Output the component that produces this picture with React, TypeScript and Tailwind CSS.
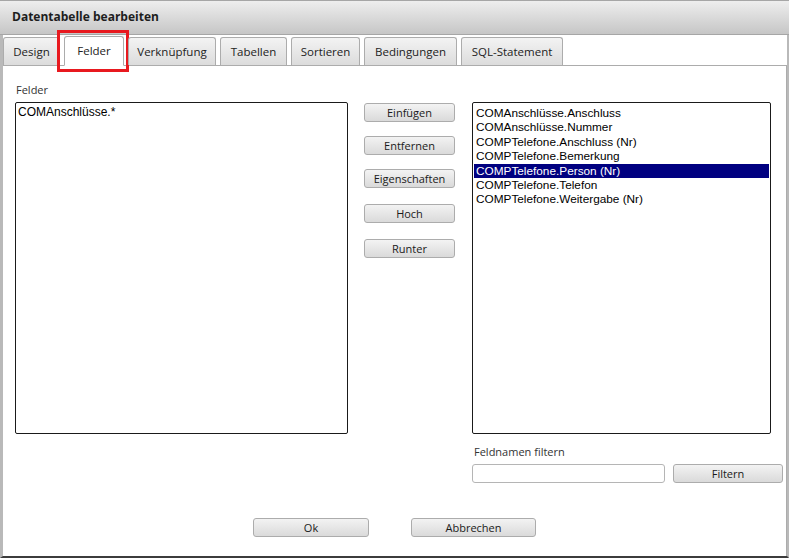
const ui = { fontFamily: '"Open Sans", "Noto Sans", "DejaVu Sans", sans-serif' };
const arial = { fontFamily: '"Liberation Sans", Arial, sans-serif' };

const tabs = [
  { label: 'Design', w: 57 },
  { label: 'Felder', w: 60 },
  { label: 'Verknüpfung', w: 88 },
  { label: 'Tabellen', w: 67 },
  { label: 'Sortieren', w: 69 },
  { label: 'Bedingungen', w: 93 },
  { label: 'SQL-Statement', w: 102 },
];

const fields = [
  'COMAnschlüsse.Anschluss',
  'COMAnschlüsse.Nummer',
  'COMPTelefone.Anschluss (Nr)',
  'COMPTelefone.Bemerkung',
  'COMPTelefone.Person (Nr)',
  'COMPTelefone.Telefon',
  'COMPTelefone.Weitergabe (Nr)',
];

function Btn({ label, className = '' }: { label: string; className?: string }) {
  return (
    <button
      type="button"
      style={ui}
      className={`flex h-[19px] items-center justify-center rounded-[3px] border border-[#acacac] bg-gradient-to-b from-[#f3f3f3] to-[#dadada] text-[11px] leading-none text-[#1a1a1a] ${className}`}
    >
      {label}
    </button>
  );
}

export default function App() {
  return (
    <div className="flex h-[558px] w-[789px] flex-col overflow-hidden bg-white">
      <div
        style={ui}
        className="flex h-[35px] shrink-0 items-center border-t border-b border-[#a6a6a6] bg-gradient-to-b from-[#eeeeee] to-[#c6c6c6] pl-[12px] pb-[1px] text-[12px] font-bold text-[#1e1e1e]"
      >
        Datentabelle bearbeiten
      </div>

      <div className="flex flex-1 flex-col border-l-[3px] border-r-[2px] border-b-[2px] border-l-[#b9b9b9] border-r-[#b9b9b9] border-b-[#3c3c3c]">
        <div className="flex h-[31px] shrink-0 items-end gap-[4px] border-b border-[#acacac]">
          {tabs.map((t) => {
            const active = t.label === 'Felder';
            return (
              <div
                key={t.label}
                style={{ ...ui, width: t.w }}
                className={`relative flex items-center justify-center rounded-t-[3px] border border-[#acacac] text-[11.5px] text-[#222] ${
                  active
                    ? '-mb-px h-[30px] border-b-white bg-white'
                    : 'h-[28px] border-b-0 bg-gradient-to-b from-[#f3f3f3] to-[#dcdcdc]'
                }`}
              >
                {t.label}
                {active ? (
                  <div className="pointer-events-none absolute -left-[8px] -right-[6px] -top-[7px] h-[42px] border-[3px] border-[#e8191f]" />
                ) : null}
              </div>
            );
          })}
        </div>

        <div className="flex flex-1 flex-col border-r border-[#acacac] pl-[12px]">
          <div className="flex pt-[16px]">
            <div className="w-[333px]">
              <div style={ui} className="h-[20px] pl-[1px] text-[11px] leading-[16px] text-[#333]">
                Felder
              </div>
              <div style={arial} className="h-[332px] rounded-[2px] border border-[#1a1a1a] px-[2px] pt-[2px] text-[12px] leading-[14px] text-black">
                COMAnschlüsse.*
              </div>
            </div>

            <div className="ml-[16px] flex w-[91px] flex-col pt-[21px]">
              <Btn label="Einfügen" />
              <Btn label="Entfernen" className="mt-[14px]" />
              <Btn label="Eigenschaften" className="mt-[14px]" />
              <Btn label="Hoch" className="mt-[16px]" />
              <Btn label="Runter" className="mt-[16px]" />
            </div>

            <div className="ml-[17px] pt-[20px]">
              <div style={arial} className="h-[332px] w-[299px] rounded-[2px] border border-[#1a1a1a] px-[1px] pt-[3px] text-[11.8px] leading-[14.4px] text-black">
                {fields.map((f, i) => (
                  <div key={f} className={`pl-[2px] ${i === 4 ? 'bg-[#000080] text-white' : ''}`}>
                    {f}
                  </div>
                ))}
              </div>
            </div>
          </div>

          <div className="ml-[457px] mt-[12px]">
            <div style={ui} className="h-[18px] pl-[2px] text-[11px] leading-[12px] text-[#333]">
              Feldnamen filtern
            </div>
            <div className="flex items-center">
              <div className="h-[19px] w-[193px] rounded-[3px] border border-[#b5b5b5] bg-white" />
              <Btn label="Filtern" className="ml-[8px] w-[110px]" />
            </div>
          </div>

          <div className="mt-[35px] flex">
            <Btn label="Ok" className="ml-[238px] w-[116px]" />
            <Btn label="Abbrechen" className="ml-[42px] w-[125px]" />
          </div>
        </div>
      </div>
    </div>
  );
}
